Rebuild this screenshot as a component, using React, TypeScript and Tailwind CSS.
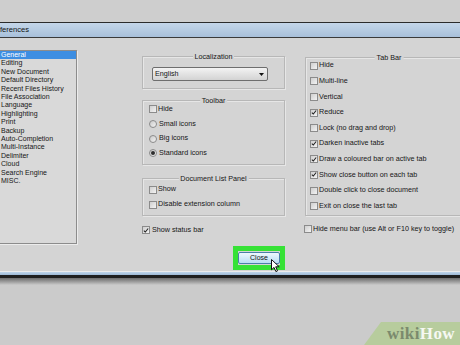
const sections = [
  "General",
  "Editing",
  "New Document",
  "Default Directory",
  "Recent Files History",
  "File Association",
  "Language",
  "Highlighting",
  "Print",
  "Backup",
  "Auto-Completion",
  "Multi-Instance",
  "Delimiter",
  "Cloud",
  "Search Engine",
  "MISC.",
];

const tabBarOptions = [
  { label: "Hide", checked: false },
  { label: "Multi-line", checked: false },
  { label: "Vertical", checked: false },
  { label: "Reduce", checked: true },
  { label: "Lock (no drag and drop)", checked: false },
  { label: "Darken inactive tabs", checked: true },
  { label: "Draw a coloured bar on active tab", checked: true },
  { label: "Show close button on each tab", checked: true },
  { label: "Double click to close document", checked: false },
  { label: "Exit on close the last tab", checked: false },
];

function Check({ checked = false }: { checked?: boolean }) {
  return (
    <span className="flex h-[8px] w-[8px] shrink-0 items-center justify-center border border-[#8b8b8b] bg-linear-to-br from-[#cfcfcf] to-[#f3f3f3]">
      {checked && (
        <svg width="7" height="7" viewBox="0 0 7 7">
          <path d="M1 3.6 L2.7 5.3 L6 1.2" fill="none" stroke="#1e1e1e" strokeWidth="1.2" />
        </svg>
      )}
    </span>
  );
}

function Radio({ selected = false }: { selected?: boolean }) {
  return (
    <span className="flex h-[8px] w-[8px] shrink-0 items-center justify-center rounded-full border border-[#8b8b8b] bg-linear-to-br from-[#c9c9c9] to-[#f3f3f3]">
      {selected && <span className="h-[4px] w-[4px] rounded-full bg-[#2e2e2e]" />}
    </span>
  );
}

function Group({ title, className, children }: { title: string; className: string; children?: React.ReactNode }) {
  return (
    <div className={`relative border border-[#b7b7b7] shadow-[inset_1px_1px_0_#e6e6e6,1px_1px_0_#e6e6e6] ${className}`}>
      <span className="absolute -top-[5px] left-1/2 -translate-x-1/2 whitespace-nowrap bg-[#d4d4d4] px-[2px] leading-[9px]">
        {title}
      </span>
      {children}
    </div>
  );
}

export default function App() {
  return (
    <div className="relative flex h-[345px] w-[460px] flex-col overflow-hidden bg-[#cbcbcb] font-['Liberation_Sans',Arial,sans-serif] text-[7.2px] text-[#161616]">
      <div className="h-[22px] shrink-0 bg-[#cecece]" />
      <div className="h-[1px] shrink-0 bg-[#2b2b2b]" />
      <div className="flex h-[14px] shrink-0 items-center bg-linear-to-b from-[#c4d6e9] to-[#a8c0da] text-[7.6px] text-[#111]">
        ferences
      </div>
      <div className="h-[1px] shrink-0 bg-[#3a3a3a]" />

      {/* dialog body */}
      <div className="flex h-[233px] shrink-0 flex-col bg-[#d4d4d4]">
        <div className="flex items-start pt-[12px]">
          {/* section list */}
          <div className="-ml-[3px] h-[194px] w-[80px] shrink-0 border border-[#8c8c8c] bg-[#d9d9d9] shadow-[1px_1px_0_#ececec] text-[7px] leading-[8.4px]">
            {sections.map((s, i) => (
              <div key={s} className={i === 0 ? "bg-[#3d8ee2] pl-[3px] text-white" : "pl-[3px]"}>
                {s}
              </div>
            ))}
          </div>

          {/* middle column */}
          <div className="ml-[65px] mt-[6px] flex w-[143px] shrink-0 flex-col">
            <Group title="Localization" className="h-[33px]">
              <div className="ml-[9px] mt-[10px] flex h-[14px] w-[116px] items-center justify-between rounded-[2px] border border-[#6e6e6e] bg-linear-to-b from-[#f3f3f3] to-[#d3d3d3] pl-[2px] pr-[3px]">
                <span>English</span>
                <svg width="5" height="3" viewBox="0 0 5 3">
                  <path d="M0 0 H5 L2.5 3 Z" fill="#111" />
                </svg>
              </div>
            </Group>

            <Group title="Toolbar" className="mt-[11px] h-[65px]">
              <div className="flex flex-col pl-[6px] pt-[1px]">
                <div className="flex h-[14.7px] items-center gap-[1px]">
                  <Check />
                  <span>Hide</span>
                </div>
                <div className="flex h-[14.7px] items-center gap-[2px]">
                  <Radio />
                  <span>Small icons</span>
                </div>
                <div className="flex h-[14.7px] items-center gap-[2px]">
                  <Radio />
                  <span>Big icons</span>
                </div>
                <div className="flex h-[14.7px] items-center gap-[2px]">
                  <Radio selected />
                  <span>Standard icons</span>
                </div>
              </div>
            </Group>

            <Group title="Document List Panel" className="mt-[13px] h-[38px]">
              <div className="flex flex-col pl-[6px] pt-[3px]">
                <div className="flex h-[15px] items-center gap-[1px]">
                  <Check />
                  <span>Show</span>
                </div>
                <div className="flex h-[15px] items-center gap-[1px]">
                  <Check />
                  <span>Disable extension column</span>
                </div>
              </div>
            </Group>

            <div className="mt-[9px] flex h-[10px] items-center gap-[2px]">
              <Check checked />
              <span>Show status bar</span>
            </div>
          </div>

          {/* right column */}
          <div className="ml-[20px] mt-[7px] flex w-[168px] shrink-0 flex-col">
            <Group title="Tab Bar" className="h-[159px]">
              <div className="flex flex-col pl-[4px]">
                {tabBarOptions.map((o) => (
                  <div key={o.label} className="flex h-[15.6px] items-center gap-[1px]">
                    <Check checked={o.checked} />
                    <span className="whitespace-nowrap">{o.label}</span>
                  </div>
                ))}
              </div>
            </Group>
            <div className="-ml-[1px] mt-[8px] flex h-[10px] items-center gap-[1px]">
              <Check />
              <span className="whitespace-nowrap">Hide menu bar (use Alt or F10 key to toggle)</span>
            </div>
          </div>
        </div>

        {/* close button with highlight */}
        <div className="relative ml-[233px] mt-[2px] w-fit border-[5px] border-[#36e236] py-[1px]">
          <button className="flex h-[12px] w-[42px] items-center justify-center rounded-[2px] border border-[#4a7fa8] bg-linear-to-b from-[#eef8fe] to-[#b9def4] text-[7px] text-[#111]">
            Close
          </button>
          <svg className="absolute left-[33px] top-[8px]" width="10" height="14" viewBox="0 0 10 14">
            <path d="M0.5 0.5 L0.5 10.8 L3 8.4 L4.9 12.6 L6.5 11.9 L4.7 7.8 L8.2 7.8 Z" fill="#fff" stroke="#111" strokeWidth="1" />
          </svg>
        </div>
      </div>

      {/* bottom window edge */}
      <div className="h-[1px] shrink-0 bg-[#ececec]" />
      <div className="h-[3px] shrink-0 bg-linear-to-b from-[#c0d5ea] to-[#9db9d6]" />
      <div className="h-[3px] shrink-0 bg-[#1f1f1f]" />
      <div className="h-[7px] shrink-0 bg-linear-to-b from-[#6c6c6c] to-[#cbcbcb]" />
      <div className="flex-1" />

      {/* watermark */}
      <div className="absolute bottom-0 right-0 flex h-[23px] w-[96px] items-center justify-end bg-[#b7cc9d] pr-[5px] [clip-path:polygon(17px_0,100%_0,100%_100%,0_100%)]">
        <span className="font-['Liberation_Serif',serif] text-[17px] font-bold leading-none tracking-[0.4px]">
          <span className="text-[#7b8a6d]">wiki</span>
          <span className="text-[#f6f8f2]">How</span>
        </span>
      </div>
    </div>
  );
}
